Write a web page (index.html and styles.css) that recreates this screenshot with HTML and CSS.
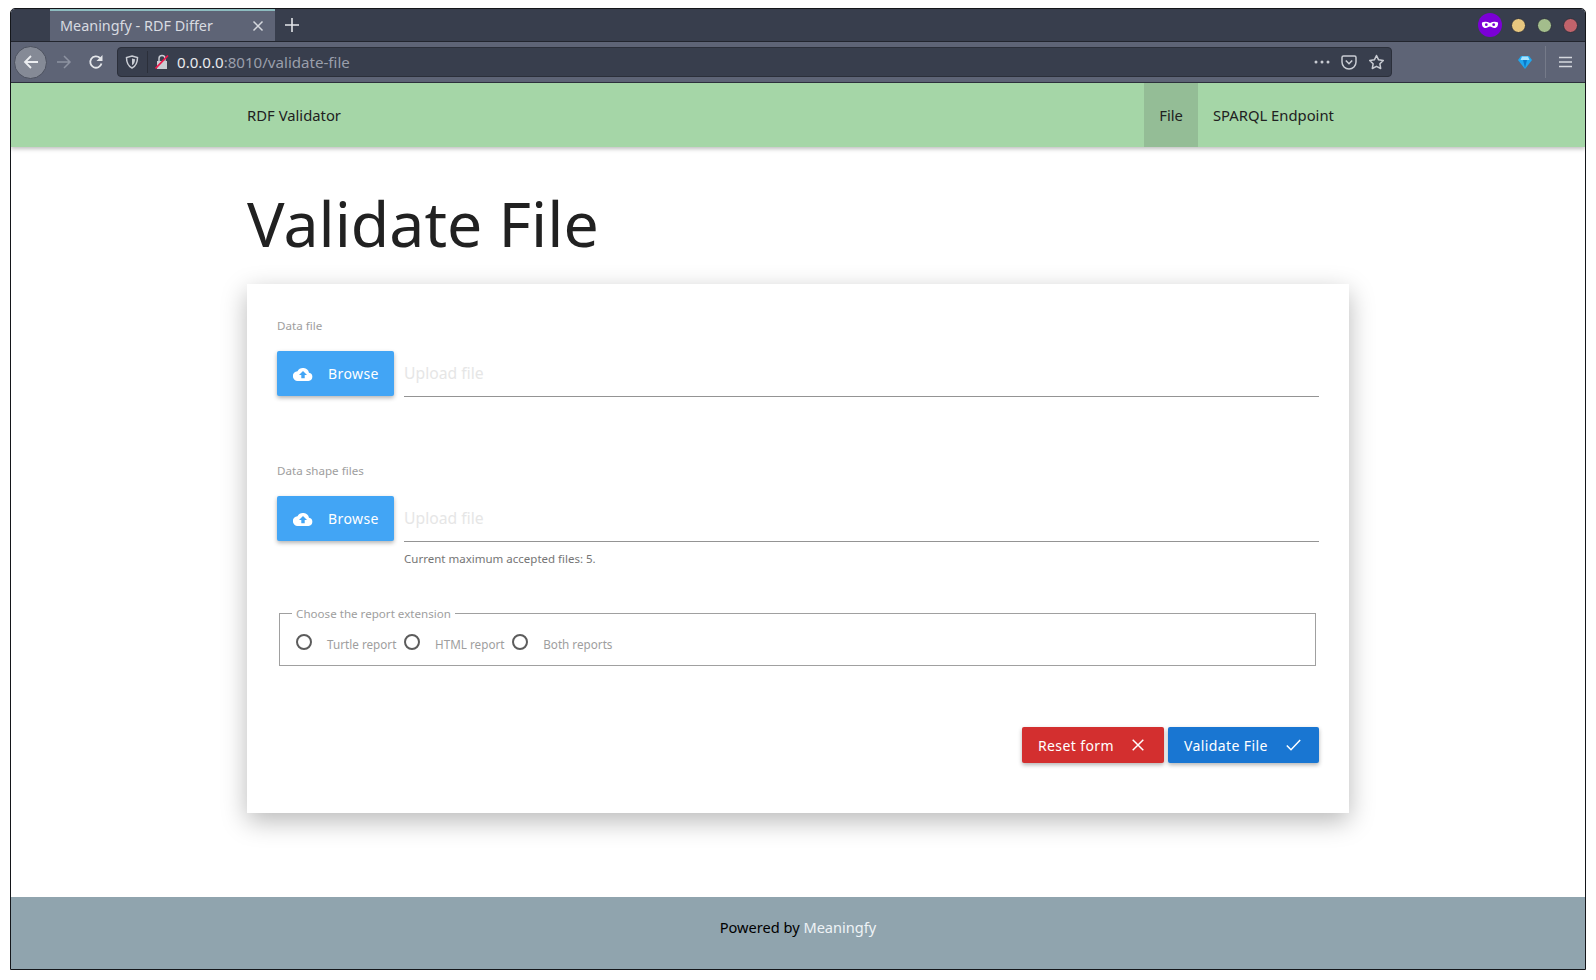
FILE: index.html
```html
<!DOCTYPE html>
<html lang="en">
<head>
    <meta charset="UTF-8">
    <meta name="viewport" content="width=device-width, initial-scale=1.0">
    <title>Meaningfy - RDF Differ</title>
    <link rel="stylesheet" href="styles.css">
</head>
<body>
    <div class="window">
        <!-- Browser chrome -->
        <div class="tabbar">
            <div class="tab">
                <span class="tab-title">Meaningfy - RDF Differ</span>
                <svg class="tab-close" width="12" height="12" viewBox="0 0 12 12"><path d="M1.5 1.5l9 9M10.5 1.5l-9 9" stroke="#d5d8de" stroke-width="1.5" fill="none"/></svg>
            </div>
            <svg class="new-tab" width="16" height="16" viewBox="0 0 16 16"><path d="M8 1v14M1 8h14" stroke="#e4e6ea" stroke-width="1.6" fill="none"/></svg>
            <div class="tabbar-right">
                <svg width="24" height="24" viewBox="0 0 24 24"><circle cx="12" cy="12" r="12" fill="#7b00d6"/><path d="M4 9.5c3-1.2 5.500-.6 8 .4 2.500-1 5-1.600 8-.4 .4 3-1 5.500-3.500 5.500-2 0-3-1.500-4.500-1.500s-2.500 1.500-4.500 1.500C5 15 3.600 12.500 4 9.500z" fill="#fff"/><circle cx="8.300" cy="11.700" r="1.400" fill="#7b00d6"/><circle cx="15.700" cy="11.700" r="1.400" fill="#7b00d6"/></svg>
                <span class="dot dot-min"></span>
                <span class="dot dot-max"></span>
                <span class="dot dot-close"></span>
            </div>
        </div>
        <div class="toolbar">
            <span class="back-btn">
                <svg width="18" height="18" viewBox="0 0 18 18"><path d="M16 9H3M9 3L3 9l6 6" stroke="#eceef1" stroke-width="1.800" fill="none"/></svg>
            </span>
            <svg class="fwd" width="18" height="18" viewBox="0 0 18 18"><path d="M2 9h13M9 3l6 6-6 6" stroke="#8d93a1" stroke-width="1.500" fill="none"/></svg>
            <svg class="reload" width="16" height="16" viewBox="0 0 16 16"><path d="M13.500 9.500A5.700 5.700 0 1 1 12 4" stroke="#e4e6ea" stroke-width="1.800" fill="none"/><path d="M14.500 1v6h-6z" fill="#e4e6ea"/></svg>
            <div class="urlbar">
                <svg width="14" height="14" viewBox="0 0 14 14"><path d="M7 1l5.500 1.500c0 5-1.500 8.500-5.500 10.500C3 11 1.500 7.500 1.500 2.500z" stroke="#c9ccd3" stroke-width="1.500" fill="none"/><path d="M7 3.500l3 .8c0 2.700-.8 4.700-3 6z" fill="#c9ccd3"/></svg>
                <span class="url-sep"></span>
                <svg width="14" height="16" viewBox="0 0 14 16"><path d="M2 7h10v8H2z" fill="#c9ccd3"/><path d="M4 7V4.500a3 3 0 0 1 6 0V7" stroke="#c9ccd3" stroke-width="1.500" fill="none"/><path d="M0.500 14.500L13 1.500" stroke="#f0164a" stroke-width="1.800"/></svg>
                <span class="url"><span class="url-host">0.0.0.0</span>:8010/validate-file</span>
                <span class="url-actions">
                    <svg width="16" height="4" viewBox="0 0 16 4"><circle cx="2" cy="2" r="1.500" fill="#c9ccd3"/><circle cx="8" cy="2" r="1.500" fill="#c9ccd3"/><circle cx="14" cy="2" r="1.500" fill="#c9ccd3"/></svg>
                    <svg width="16" height="15" viewBox="0 0 16 15"><path d="M2.500 1h11A1.500 1.500 0 0 1 15 2.500V7a7 7 0 0 1-14 0V2.500A1.500 1.500 0 0 1 2.500 1z" stroke="#c9ccd3" stroke-width="1.500" fill="none"/><path d="M4.800 5.500L8 8.700l3.200-3.200" stroke="#c9ccd3" stroke-width="1.600" fill="none"/></svg>
                    <svg width="17" height="16" viewBox="0 0 17 16"><path d="M8.500 1.500l2.100 4.300 4.700.7-3.400 3.300.8 4.700-4.200-2.200-4.200 2.200.8-4.700L1.700 6.500l4.700-.7z" stroke="#c9ccd3" stroke-width="1.500" fill="none" stroke-linejoin="round"/></svg>
                </span>
            </div>
            <div class="toolbar-right">
                <svg width="14" height="14" viewBox="0 0 14 14"><path d="M3 1h8l3 4-7 9-7-9z" fill="#1fa8f0"/><path d="M4 1.500h6L11.500 5h-9z" fill="#a8e4ff"/><path d="M5 5h4l-2 8z" fill="#0a78c8"/></svg>
                <span class="toolbar-sep"></span>
                <svg width="13" height="12" viewBox="0 0 13 12"><path d="M0 1.500h13M0 6h13M0 10.500h13" stroke="#d5d8de" stroke-width="1.500"/></svg>
            </div>
        </div>

        <!-- Page -->
        <nav class="navbar">
            <div class="nav-inner">
                <a class="brand">RDF Validator</a>
                <div class="nav-links">
                    <a class="nav-link active">File</a>
                    <a class="nav-link">SPARQL Endpoint</a>
                </div>
            </div>
        </nav>

        <main class="content">
            <h1 class="page-title">Validate File</h1>
            <form class="card">
                <div class="field">
                    <label class="field-label">Data file</label>
                    <div class="file-row">
                        <button type="button" class="btn btn-browse">
                            <svg width="20" height="14" viewBox="0 0 20 14"><path d="M16 5.700A6.200 6.200 0 0 0 4.500 4.200 4.900 4.900 0 0 0 5 14h10.500a4.200 4.200 0 0 0 .5-8.300zM11.700 8v3.300H8.300V8H6l4-4 4 4z" fill="#fff" fill-rule="evenodd"/></svg>
                            <span>Browse</span>
                        </button>
                        <div class="file-input">Upload file</div>
                    </div>
                </div>
                <div class="field field-shapes">
                    <label class="field-label">Data shape files</label>
                    <div class="file-row">
                        <button type="button" class="btn btn-browse">
                            <svg width="20" height="14" viewBox="0 0 20 14"><path d="M16 5.700A6.200 6.200 0 0 0 4.500 4.200 4.900 4.900 0 0 0 5 14h10.500a4.200 4.200 0 0 0 .5-8.300zM11.700 8v3.300H8.300V8H6l4-4 4 4z" fill="#fff" fill-rule="evenodd"/></svg>
                            <span>Browse</span>
                        </button>
                        <div class="file-input">Upload file</div>
                    </div>
                    <p class="hint">Current maximum accepted files: 5.</p>
                </div>
                <fieldset class="report-group">
                    <legend>Choose the report extension</legend>
                    <label class="radio"><span class="radio-mark"></span><span class="radio-text">Turtle report</span></label>
                    <label class="radio"><span class="radio-mark"></span><span class="radio-text">HTML report</span></label>
                    <label class="radio"><span class="radio-mark"></span><span class="radio-text">Both reports</span></label>
                </fieldset>
                <div class="actions">
                    <button type="button" class="btn btn-reset">
                        <span>Reset form</span>
                        <svg width="12" height="12" viewBox="0 0 12 12"><path d="M.7.700l10.600 10.600M11.300.700L.7 11.300" stroke="#fff" stroke-width="1.500" fill="none"/></svg>
                    </button>
                    <button type="button" class="btn btn-validate">
                        <span>Validate File</span>
                        <svg width="15" height="12" viewBox="0 0 15 12"><path d="M.8 6.500l4.200 4.200L14.200 1" stroke="#fff" stroke-width="1.500" fill="none"/></svg>
                    </button>
                </div>
            </form>
        </main>

        <footer class="footer">Powered by <a class="footer-link">Meaningfy</a></footer>
    </div>
</body>
</html>
```
FILE: styles.css
```css
/* General Styles */
* {
    box-sizing: border-box;
}

html, body {
    height: 100%;
}

body {
    margin: 0;
    padding: 8px 10px 10px;
    background-color: #fff;
    font-family: 'Noto Sans', sans-serif;
    color: #212121;
    overflow: hidden;
}

.window {
    width: 1576px;
    height: 962px;
    border: 1px solid #14161a;
    border-radius: 5px 5px 0 0;
    display: flex;
    flex-direction: column;
    overflow: hidden;
}

/* Browser chrome */
.tabbar {
    height: 33px;
    flex: none;
    display: flex;
    align-items: stretch;
    padding-left: 39px;
    background-color: #383e4d;
    border-bottom: 1px solid #22252e;
}

.tab {
    width: 225px;
    display: flex;
    align-items: center;
    justify-content: space-between;
    padding: 0 11px 2px 10px;
    background-color: #5e6476;
    border-top: 2px solid #8dbcc0;
    color: #d8dbe1;
    font-size: 14.4px;
}

.tab-close {
    margin-top: 2px;
}

.new-tab {
    align-self: center;
    margin-left: 9px;
}

.tabbar-right {
    margin-left: auto;
    display: flex;
    align-items: center;
    gap: 11px;
    padding-right: 7px;
}

.dot {
    width: 15px;
    height: 15px;
    border-radius: 50%;
    border: 1px solid #2e323d;
}

.dot-min {
    background-color: #e8c77f;
    margin-left: -2px;
}

.dot-max {
    background-color: #a3bd8c;
}

.dot-close {
    background-color: #c1636b;
}

.toolbar {
    height: 41px;
    flex: none;
    display: flex;
    align-items: center;
    padding-left: 3px;
    background-color: #5e6476;
    border-bottom: 1px solid #2e323d;
}

.back-btn {
    width: 33px;
    height: 33px;
    border-radius: 50%;
    border: 1px solid #4c515f;
    background-color: #858a96;
    display: flex;
    align-items: center;
    justify-content: center;
}

.fwd {
    margin-left: 8px;
}

.reload {
    margin-left: 15px;
}

.urlbar {
    width: 1275px;
    height: 30px;
    margin-left: 13px;
    display: flex;
    align-items: center;
    padding: 0 6px 0 7px;
    background-color: #383e4d;
    border: 1px solid #2b2f3a;
    border-radius: 4px;
}

.url-sep {
    width: 1px;
    height: 22px;
    margin: 0 7px 0 8px;
    background-color: #2b2f3a;
}

.url {
    margin-left: 8px;
    color: #9a9fab;
    font-size: 15.1px;
}

.url-host {
    color: #e8eaee;
}

.url-actions {
    margin-left: auto;
    display: flex;
    align-items: center;
    gap: 11px;
}

.toolbar-right {
    margin-left: auto;
    display: flex;
    align-items: center;
    padding-right: 13px;
}

.toolbar-sep {
    width: 1px;
    height: 32px;
    margin: 0 13px 0 13px;
    background-color: #757a89;
}

/* Navbar */
.navbar {
    height: 64px;
    flex: none;
    background-color: #a5d6a7;
    box-shadow: 0 2px 4px rgba(0, 0, 0, 0.25);
    position: relative;
}

.nav-inner {
    width: 70%;
    height: 100%;
    margin: 0 auto;
    display: flex;
    align-items: center;
    justify-content: space-between;
}

.brand {
    font-size: 14.8px;
    color: #212121;
}

.nav-links {
    display: flex;
    height: 100%;
    margin-right: 0;
}

.nav-link {
    display: flex;
    align-items: center;
    padding: 0 15px;
    font-size: 14.8px;
    color: #212121;
}

.nav-link.active {
    background-color: #94bd96;
}

/* Content */
.content {
    flex: 1;
    width: 70%;
    margin: 0 auto;
}

.page-title {
    margin: 38px 0 23px;
    font-size: 62.6px;
    font-weight: 400;
    line-height: 76px;
    color: #212121;
}

.card {
    height: 529px;
    padding: 30px;
    background-color: #fff;
    box-shadow: 0 8px 24px rgba(0, 0, 0, 0.28);
}

.field-label {
    display: block;
    margin-top: 4px;
    font-size: 11.6px;
    line-height: 16px;
    color: #9e9e9e;
}

.file-row {
    display: flex;
    gap: 10px;
    margin-top: 17px;
}

.field-shapes {
    margin-top: 66px;
}

.file-input {
    flex: 1;
    height: 46px;
    border-bottom: 1px solid #949494;
    font-size: 15.7px;
    line-height: 44px;
    color: #e6e6e6;
}

.hint {
    margin: 9px 0 0 127px;
    font-size: 11.5px;
    line-height: 16px;
    color: #757575;
}

.btn {
    display: flex;
    align-items: center;
    border: none;
    border-radius: 2px;
    color: #fff;
    font-family: inherit;
    font-size: 14px;
    letter-spacing: 0.4px;
    box-shadow: 0 2px 4px rgba(0, 0, 0, 0.3);
}

.btn-browse {
    width: 117px;
    height: 45px;
    padding: 0 0 0 16px;
    gap: 15px;
    background-color: #42a5f5;
}

.report-group {
    height: 64px;
    margin: 35px 3px 0 2px;
    padding: 0 16px;
    border: 1px solid #a0a0a0;
    display: flex;
    align-items: center;
}

.report-group legend {
    padding: 2px 4px 0;
    margin-left: -4px;
    font-size: 11.6px;
    line-height: 20px;
    color: #9e9e9e;
}

.radio {
    display: inline-flex;
    align-items: center;
    margin-top: -5px;
    margin-right: 7.7px;
    font-size: 11.7px;
    color: #9e9e9e;
}

.radio-mark {
    width: 16px;
    height: 16px;
    margin-right: 15px;
    border: 2px solid #5c5c5c;
    border-radius: 50%;
}

.radio-text {
    margin-top: 3px;
}

.actions {
    display: flex;
    justify-content: flex-end;
    gap: 4px;
    margin-top: 61px;
}

.btn-reset, .btn-validate {
    height: 36px;
    padding: 0 16px;
    justify-content: space-between;
}

.btn-reset {
    width: 142px;
    padding-right: 20px;
    background-color: #d32f2f;
}

.btn-validate {
    width: 151px;
    padding-right: 18px;
    background-color: #1976d2;
}

/* Footer */
.footer {
    height: 72px;
    flex: none;
    padding-top: 20px;
    background-color: #90a4ae;
    color: #000;
    font-size: 14.6px;
    text-align: center;
}

.footer-link {
    color: #eef3f6;
}
```
